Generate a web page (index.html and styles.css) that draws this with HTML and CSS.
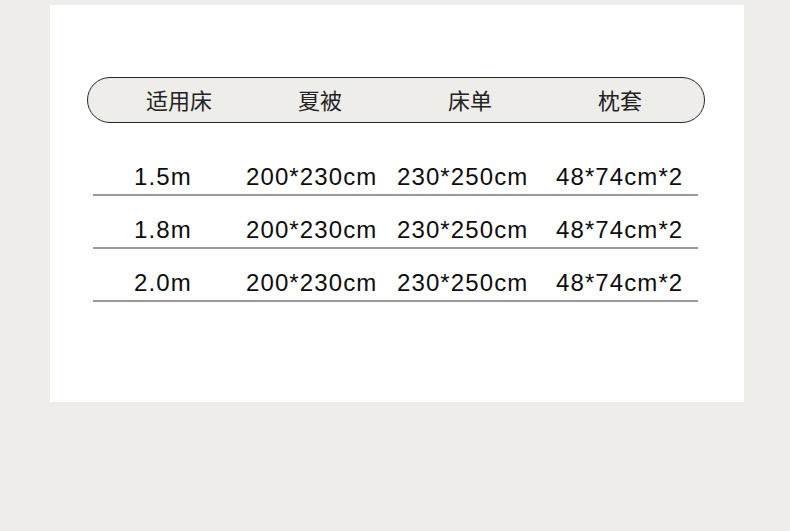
FILE: index.html
```html
<!DOCTYPE html>
<html lang="zh">
<head>
<meta charset="utf-8">
<title>尺寸表</title>
<link rel="stylesheet" href="styles.css">
</head>
<body>
<div class="card">
  <div class="pill">
    <span class="hcell">适用床</span>
    <span class="hcell">夏被</span>
    <span class="hcell">床单</span>
    <span class="hcell">枕套</span>
  </div>
  <div class="rows">
    <div class="row">
      <span class="cell">1.5m</span>
      <span class="cell">200*230cm</span>
      <span class="cell">230*250cm</span>
      <span class="cell">48*74cm*2</span>
    </div>
    <div class="row">
      <span class="cell">1.8m</span>
      <span class="cell">200*230cm</span>
      <span class="cell">230*250cm</span>
      <span class="cell">48*74cm*2</span>
    </div>
    <div class="row">
      <span class="cell">2.0m</span>
      <span class="cell">200*230cm</span>
      <span class="cell">230*250cm</span>
      <span class="cell">48*74cm*2</span>
    </div>
  </div>
</div>
</body>
</html>
```
FILE: styles.css
```css
html, body {
  margin: 0;
  padding: 0;
}
body {
  background: #eeede9;
  width: 790px;
  height: 531px;
  overflow: hidden;
}
.card {
  box-sizing: border-box;
  margin: 5px 0 0 50px;
  width: 694px;
  height: 397px;
  background: #ffffff;
  padding: 72px 0 0 37px;
}
.pill {
  box-sizing: border-box;
  width: 618px;
  height: 46px;
  border: 1px solid #262626;
  border-radius: 23px;
  background: #eeede9;
  display: grid;
  grid-template-columns: 152px 150px 150px auto;
  align-items: center;
  padding-left: 58px;
  font-family: "Noto Sans CJK SC", "Noto Sans", sans-serif;
  font-size: 22px;
  color: #222222;
  line-height: 26px;
}
.hcell {
  display: block;
  margin-top: -2px;
}
.rows {
  margin: 20px 0 0 6px;
  width: 605px;
}
.row {
  box-sizing: border-box;
  height: 53px;
  border-bottom: 2px solid #999999;
  display: grid;
  grid-template-columns: 112px 151px 159px auto;
  align-items: end;
  padding: 0 0 4px 41px;
  font-family: "Liberation Sans", Arial, sans-serif;
  font-size: 24px;
  line-height: 26px;
  letter-spacing: 1.1px;
  color: #0d0d0d;
}
.cell {
  display: block;
  white-space: nowrap;
}
```
